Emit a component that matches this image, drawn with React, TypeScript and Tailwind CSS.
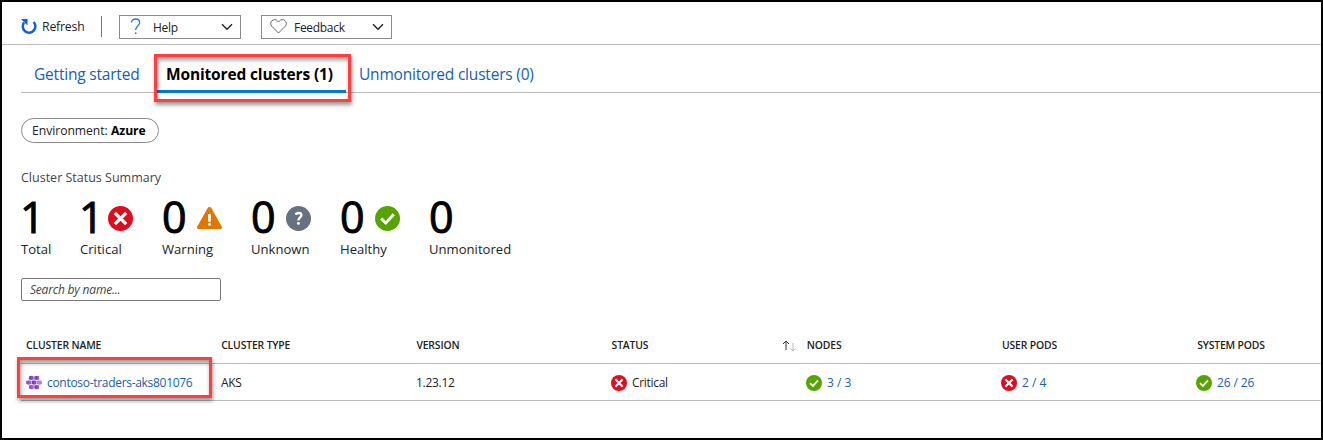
import React from "react";

function Critical({ className }: { className: string }) {
  return (
    <svg viewBox="0 0 25 25" className={className}>
      <circle cx="12.5" cy="12.5" r="12.5" fill="#e00b1c" />
      <path d="M6.8 6.8 18.2 18.2M18.2 6.8 6.8 18.2" stroke="#fff" strokeWidth="3.3" />
    </svg>
  );
}

function Healthy({ className }: { className: string }) {
  return (
    <svg viewBox="0 0 25 25" className={className}>
      <circle cx="12.5" cy="12.5" r="12.5" fill="#57a300" />
      <path d="M6.2 12.6 10.8 17 18.8 8.3" stroke="#fff" strokeWidth="2.9" fill="none" />
    </svg>
  );
}

function Warning({ className }: { className: string }) {
  return (
    <svg viewBox="0 0 25 22" className={className}>
      <path d="M12.5 0c.8 0 1.4.4 1.8 1.1L24.7 19.5c.7 1.3-.1 2.5-1.4 2.5H1.7C.4 22-.4 20.8.3 19.5L10.7 1.1C11.1.4 11.7 0 12.5 0Z" fill="#e07700" />
      <path d="M11 7h3l-.3 8h-2.4z" fill="#fff" />
      <circle cx="12.5" cy="17.2" r="1.5" fill="#fff" />
    </svg>
  );
}

function Unknown({ className }: { className: string }) {
  return (
    <svg viewBox="0 0 25 25" className={className}>
      <circle cx="12.5" cy="12.5" r="12.5" fill="#66727f" />
      <path d="M9.3 8.3c1.2-1 2.3-1.3 3.4-1.3 1.8 0 2.7.9 2.7 2.2 0 2-2.9 2.2-2.9 4.7v.6" stroke="#fff" strokeWidth="2.3" fill="none" />
      <circle cx="12.4" cy="17.4" r="1.45" fill="#fff" />
    </svg>
  );
}

function Chevron() {
  return (
    <svg viewBox="0 0 12 8" className="h-2 w-3">
      <path d="M1 1.2 6 6.2 11 1.2" stroke="#222" strokeWidth="1.4" fill="none" />
    </svg>
  );
}

const hexes: [number, number, string][] = [
  [5.3, 2.4, "#7a3fc0"], [10.7, 2.4, "#7a3fc0"],
  [2.6, 7, "#8a4fd0"], [8, 7, "#7438b8"], [13.4, 7, "#b77af4"],
  [5.3, 11.6, "#8c50d2"], [10.7, 11.6, "#7a3fc0"],
];

function Kubernetes() {
  return (
    <svg viewBox="0 0 16 14" className="h-[15px] w-4">
      {hexes.map(([x, y, c]) => (
        <g key={`${x}-${y}`}>
          <path d={`M${x - 2.4} ${y - 1.5}l2.4-.7 2.4.7v3l-2.4.7-2.4-.7z`} fill={c} />
          <path d={`M${x} ${y - 1.2}l2.4-.3v3l-2.4.7z`} fill="#b77af4" opacity=".4" />
        </g>
      ))}
    </svg>
  );
}

const stats = [
  { n: "1", label: "Total", col: "w-[59px]", digit: "w-7 -ml-px", icon: null },
  { n: "1", label: "Critical", col: "w-[82px]", digit: "w-7 -ml-px mr-px", icon: <Critical className="size-[25px] shrink-0" /> },
  { n: "0", label: "Warning", col: "w-[89px]", digit: "w-[35px]", icon: <Warning className="-mt-0.5 h-[22px] w-[25px] shrink-0" /> },
  { n: "0", label: "Unknown", col: "w-[89px]", digit: "w-[35px]", icon: <Unknown className="size-[25px] shrink-0" /> },
  { n: "0", label: "Healthy", col: "w-[89px]", digit: "w-[35px]", icon: <Healthy className="size-[25px] shrink-0" /> },
  { n: "0", label: "Unmonitored", col: "w-[100px]", digit: "w-[35px]", icon: null },
];

export default function App() {
  return (
    <div className="h-[440px] w-[1323px] overflow-hidden border-2 border-black bg-white font-['Open_Sans',sans-serif] text-[12px] tracking-[-0.3px] whitespace-nowrap text-[#222]">
      <header className="flex h-[43px] items-center border-b border-[#bbb] pt-[7px] pl-[18px]">
        <svg viewBox="0 0 18 18" className="size-[18px]">
          <path d="M4 4.6A6.3 6.3 0 1 0 13.6 4" stroke="#0f5fd8" strokeWidth="2.5" fill="none" />
          <path d="M1 1h6.5v6.5L5.5 5.5 3.5 3.5z" fill="#0f5fd8" />
        </svg>
        <span className="ml-1 w-[59px] pt-0.5 text-[12.3px] tracking-[-0.2px]">Refresh</span>
        <div className="h-[21px] w-px bg-[#777]" />
        <button className="ml-[17px] flex h-6 w-[122px] items-center border border-[#8a8a8a] pl-[10px]">
          <svg viewBox="0 0 12 17" className="h-[17px] w-3">
            <path d="M1.5 4.5C1.5 2.2 3.4 1 5.5 1 8 1 9.7 2.4 9.7 4.6c0 3.3-4 3.4-4 7.4" stroke="#2f73e0" strokeWidth="1.3" fill="none" />
            <circle cx="5.7" cy="15.2" r=".9" fill="#2f73e0" />
          </svg>
          <span className="ml-[11px] w-[68px] pt-0.5 text-left">Help</span>
          <Chevron />
        </button>
        <button className="ml-5 flex h-6 w-[131px] items-center border border-[#8a8a8a] pl-2">
          <svg viewBox="0 0 17 15" className="h-[15px] w-[17px]">
            <path d="M8.5 14 1.8 7.3C.2 5.6.4 3 1.9 1.7c1.8-1.6 4.3-1.3 5.6.2l1 1.2 1-1.2c1.3-1.5 3.8-1.8 5.6-.2 1.5 1.3 1.7 3.9.1 5.6z" stroke="#666" fill="none" />
          </svg>
          <span className="ml-[7px] w-[78px] pt-0.5 text-left">Feedback</span>
          <Chevron />
        </button>
      </header>

      <nav className="ml-[19px] flex h-12 border-b border-[#bbb] text-[15.5px] leading-[22px] text-[#1560b0]">
        <div className="w-[133px] pt-[18px] pl-[13px] tracking-[-0.2px]">Getting started</div>
        <div className="relative h-12 w-[192px] border-b-[3px] border-[#0078d4] pt-[18px] pl-3 font-bold tracking-[-0.15px] text-black">
          Monitored clusters (1)
          <div className="absolute top-[9px] left-0 h-12 w-[197px] border-[3px] border-[#fc4040] shadow-[1px_3px_4px_rgba(0,0,0,0.4),inset_1px_3px_4px_rgba(0,0,0,0.4)]" />
        </div>
        <div className="pt-[18px] pl-[13px] tracking-[-0.2px]">Unmonitored clusters (0)</div>
      </nav>

      <main className="pl-[19px]">
        <div className="mt-[25px] flex h-[25px] w-[138px] items-center rounded-full border border-[#8a8a8a] pt-px pl-[10px] text-[12.2px] tracking-[-0.05px]">
          <span>Environment: <b className="text-black">Azure</b></span>
        </div>
        <h2 className="mt-[25px] h-5 text-[12.5px] leading-5 tracking-normal text-[#444]">Cluster Status Summary</h2>
        <section className="mt-[7px] flex h-[72px] tracking-normal">
          {stats.map((s) => (
            <div key={s.label} className={s.col}>
              <div className="flex h-11 items-center pt-[3px] text-[43px] leading-[40px] text-black">
                <span className={`${s.digit} -mt-[3px] shrink-0 [-webkit-text-stroke:1px_black]`}>{s.n}</span>
                {s.icon}
              </div>
              <div className="text-[13.1px] leading-5">{s.label}</div>
            </div>
          ))}
        </section>
        <input className="mt-[11px] block h-[23px] w-[200px] rounded-[2px] border border-[#777] pl-2 text-[12px] tracking-[-0.2px] italic placeholder:text-[#444]" placeholder="Search by name..." />

        <div className="mt-[25px] grid h-[38px] grid-cols-[195.2px_195.2px_195.2px_195.2px_195.2px_195.2px_1fr] items-center border-b border-[#bbb] pt-[3px] pl-[5px] text-[10.4px] font-semibold tracking-[-0.15px]">
          <span>CLUSTER NAME</span>
          <span>CLUSTER TYPE</span>
          <span>VERSION</span>
          <span className="flex items-center justify-between pr-[11px]">
            STATUS
            <svg viewBox="0 0 14 12" className="h-3 w-3.5 shrink-0">
              <path d="M4 10V1M1 4l3-3 3 3" stroke="#333" fill="none" />
              <path d="M11 3v8M8.5 8.5 11 11l2.5-2.5" stroke="#bbb" fill="none" />
            </svg>
          </span>
          <span>NODES</span>
          <span>USER PODS</span>
          <span>SYSTEM PODS</span>
        </div>
        <div className="relative grid h-[37px] grid-cols-[195px_195px_195px_195px_195px_195px_1fr] items-center border-b border-[#bbb] pt-px pl-[5px]">
          <span className="flex items-center gap-[5px] text-[#1560b0]"><Kubernetes />contoso-traders-aks801076</span>
          <span>AKS</span>
          <span>1.23.12</span>
          <span className="flex items-center gap-[5px]"><Critical className="size-4" />Critical</span>
          <span className="flex items-center gap-[5px] tracking-normal text-[#1560b0]"><Healthy className="size-4" />3 / 3</span>
          <span className="flex items-center gap-[5px] tracking-normal text-[#1560b0]"><Critical className="size-4" />2 / 4</span>
          <span className="flex items-center gap-[5px] tracking-[-0.1px] text-[#1560b0]"><Healthy className="size-4" />26 / 26</span>
          <div className="absolute -top-[7px] -left-1 h-[41px] w-[195px] border-[3px] border-[#fc4040] shadow-[1px_3px_4px_rgba(0,0,0,0.4),inset_1px_3px_4px_rgba(0,0,0,0.4)]" />
        </div>
      </main>
    </div>
  );
}
